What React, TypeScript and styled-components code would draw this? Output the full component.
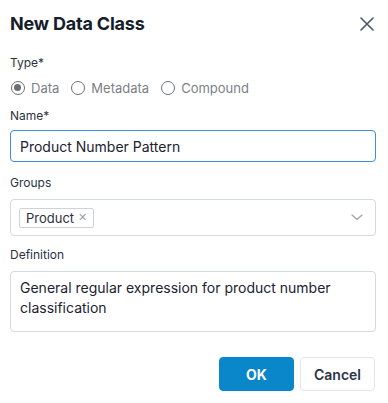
import styled, { createGlobalStyle } from 'styled-components';

const GlobalStyle = createGlobalStyle`
  html, body {
    margin: 0;
    padding: 0;
    background: #ffffff;
  }
  body {
    font-family: Inter, "Liberation Sans", Arial, sans-serif;
    color: #1f2937;
  }
  * {
    box-sizing: border-box;
  }
`;

const Dialog = styled.div`
  display: flex;
  flex-direction: column;
  width: 388px;
  height: 403px;
  padding: 12px 12px 0 10px;
`;

const Header = styled.div`
  display: flex;
  align-items: center;
  justify-content: space-between;
  height: 24px;
`;

const Title = styled.h1`
  margin: 0;
  font-size: 18px;
  line-height: 24px;
  font-weight: 700;
  color: #161d2b;
  letter-spacing: -0.2px;
`;

const CloseButton = styled.button`
  display: flex;
  align-items: center;
  justify-content: center;
  width: 16px;
  height: 16px;
  margin-right: 1px;
  padding: 0;
  border: none;
  background: none;
  color: #4b5563;
  cursor: pointer;
`;

const Field = styled.div<{ $top: number }>`
  display: flex;
  flex-direction: column;
  margin-top: ${(p) => p.$top}px;
`;

const Label = styled.label<{ $gap: number }>`
  font-size: 12px;
  line-height: 16px;
  font-weight: 400;
  color: #2b323e;
  margin-bottom: ${(p) => p.$gap}px;
`;

const RadioRow = styled.div`
  display: flex;
  align-items: center;
  height: 20px;
  gap: 11px;
`;

const RadioOption = styled.span`
  display: flex;
  align-items: center;
  gap: 6px;
  font-size: 13px;
  line-height: 20px;
  color: #7b7f86;
`;

const RadioCircle = styled.span<{ $checked?: boolean }>`
  position: relative;
  width: 14px;
  height: 14px;
  margin-left: 1px;
  border-radius: 50%;
  border: 1.5px solid #6b6f75;
  &::after {
    content: '';
    display: ${(p) => (p.$checked ? 'block' : 'none')};
    position: absolute;
    left: 2px;
    top: 2px;
    width: 7px;
    height: 7px;
    border-radius: 50%;
    background: #6b6f75;
  }
`;

const TextInput = styled.div`
  display: flex;
  align-items: center;
  height: 32px;
  padding: 0 9px;
  border: 1px solid #3d8fd6;
  border-radius: 4px;
  font-size: 14px;
  color: #1b2231;
`;

const SelectBox = styled.div`
  display: flex;
  align-items: center;
  justify-content: space-between;
  height: 37px;
  padding: 0 12px 0 8px;
  border: 1px solid #d5d9e0;
  border-radius: 4px;
`;

const Chip = styled.span`
  display: flex;
  align-items: center;
  gap: 4px;
  height: 20px;
  padding: 0 6px 0 6px;
  border: 1px solid #cfd3d9;
  border-radius: 2px;
  font-size: 13px;
  color: #2a3140;
`;

const ChipRemove = styled.span`
  font-size: 11px;
  line-height: 1;
  color: #9aa0a8;
`;

const TextArea = styled.div`
  height: 61px;
  padding: 6px 9px;
  border: 1px solid #d5d9e0;
  border-radius: 4px;
  font-size: 14px;
  line-height: 20px;
  color: #1b2231;
`;

const Footer = styled.div`
  display: flex;
  justify-content: flex-end;
  gap: 6px;
  margin-top: 25px;
  margin-right: 1px;
`;

const Button = styled.button<{ $primary?: boolean }>`
  width: 75px;
  height: 34px;
  border-radius: 4px;
  font-family: inherit;
  font-size: 14px;
  font-weight: ${(p) => (p.$primary ? 700 : 600)};
  color: ${(p) => (p.$primary ? '#ffffff' : '#2c3444')};
  background: ${(p) => (p.$primary ? '#0a87cb' : '#ffffff')};
  border: 1px solid ${(p) => (p.$primary ? '#0a87cb' : '#e3e6ea')};
  cursor: pointer;
`;

export default function App() {
  const types = [
    { name: 'Data', checked: true },
    { name: 'Metadata', checked: false },
    { name: 'Compound', checked: false },
  ];

  return (
    <>
      <GlobalStyle />
      <Dialog>
        <Header>
          <Title>New Data Class</Title>
          <CloseButton aria-label="Close">
            <svg width="14" height="14" viewBox="0 0 14 14">
              <path d="M1 1L13 13M13 1L1 13" stroke="currentColor" strokeWidth="1.6" strokeLinecap="round" />
            </svg>
          </CloseButton>
        </Header>

        <Field $top={19}>
          <Label $gap={7}>Type*</Label>
          <RadioRow>
            {types.map((t) => (
              <RadioOption key={t.name}>
                <RadioCircle $checked={t.checked} />
                {t.name}
              </RadioOption>
            ))}
          </RadioRow>
        </Field>

        <Field $top={10}>
          <Label $gap={6}>Name*</Label>
          <TextInput>Product Number Pattern</TextInput>
        </Field>

        <Field $top={13}>
          <Label $gap={8}>Groups</Label>
          <SelectBox>
            <Chip>
              Product
              <ChipRemove>✕</ChipRemove>
            </Chip>
            <svg width="12" height="7" viewBox="0 0 12 7">
              <path d="M1 1L6 5.5L11 1" stroke="#9ba3ae" strokeWidth="1.3" fill="none" strokeLinecap="round" />
            </svg>
          </SelectBox>
        </Field>

        <Field $top={11}>
          <Label $gap={8}>Definition</Label>
          <TextArea>General regular expression for product number classification</TextArea>
        </Field>

        <Footer>
          <Button $primary>OK</Button>
          <Button>Cancel</Button>
        </Footer>
      </Dialog>
    </>
  );
}
